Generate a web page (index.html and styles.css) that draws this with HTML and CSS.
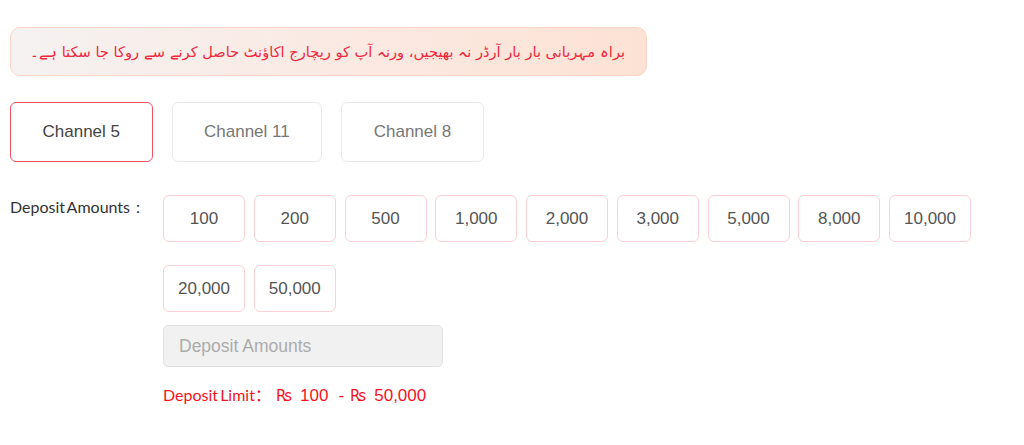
FILE: index.html
```html
<!DOCTYPE html>
<html lang="en">
<head>
<meta charset="utf-8">
<title>Deposit</title>
<link rel="stylesheet" href="styles.css">
</head>
<body>
<div class="page">
  <div class="notice" dir="rtl">براہ مہربانی بار بار آرڈر نہ بھیجیں، ورنہ آپ کو ریچارج اکاؤنٹ حاصل کرنے سے روکا جا سکتا ہے۔</div>

  <div class="channels">
    <div class="channel active">Channel 5</div>
    <div class="channel">Channel 11</div>
    <div class="channel">Channel 8</div>
  </div>

  <div class="deposit">
    <div class="label">Deposit Amounts：</div>
    <div class="body">
      <div class="amounts">
        <div class="amount">100</div>
        <div class="amount">200</div>
        <div class="amount">500</div>
        <div class="amount">1,000</div>
        <div class="amount">2,000</div>
        <div class="amount">3,000</div>
        <div class="amount">5,000</div>
        <div class="amount">8,000</div>
        <div class="amount">10,000</div>
        <div class="amount">20,000</div>
        <div class="amount">50,000</div>
      </div>
      <input class="field" type="text" placeholder="Deposit Amounts">
      <div class="limit"><span class="limit-label">Deposit Limit</span><span class="colon">：</span><span class="rs first">₨</span><span class="num">100</span><span class="dash">-</span><span class="rs">₨</span><span class="num">50,000</span></div>
    </div>
  </div>
</div>
</body>
</html>
```

FILE: styles.css
```css
* { box-sizing: border-box; }
html, body { margin: 0; padding: 0; background: #fff; }
body { font-family: "Liberation Sans", Arial, sans-serif; }

.page { padding: 27px 10px 0 10px; }

.notice {
  width: 637px;
  height: 49px;
  border: 1px solid #fbd6c6;
  border-radius: 10px;
  background: linear-gradient(to right, #f5f2f1 0%, #fbe9e2 55%, #fde2d4 100%);
  color: #f0283c;
  font-family: "DejaVu Sans", sans-serif;
  font-size: 14.6px;
  white-space: nowrap;
  display: flex;
  align-items: center;
  padding: 0 21px 0 10px;
  text-align: right;
}

.channels {
  display: flex;
  gap: 19px;
  margin-top: 26px;
}
.channel {
  height: 60px;
  padding: 0 31.5px;
  border: 1px solid #e9e9e9;
  border-radius: 6px;
  display: flex;
  align-items: center;
  justify-content: center;
  font-size: 17px;
  color: #777;
}
.channel.active {
  border: 1.5px solid #f2505f;
  color: #444;
}

.deposit {
  display: flex;
  margin-top: 33px;
}
.label {
  width: 153px;
  padding-top: 2px;
  font-family: "Lato", sans-serif;
  font-size: 16px;
  color: #333;
  word-spacing: -2px;
}
.body { flex: 1; }

.amounts {
  display: flex;
  flex-wrap: wrap;
  gap: 23px 8.75px;
  width: 820px;
}
.amount {
  width: 82px;
  height: 47px;
  border: 1.5px solid #fcd0d4;
  border-radius: 6px;
  display: flex;
  align-items: center;
  justify-content: center;
  font-size: 17px;
  color: #555;
}

.field {
  display: block;
  margin-top: 13px;
  width: 280px;
  height: 42px;
  border: 1px solid #e2e2e2;
  border-radius: 5px;
  background: #f1f1f1;
  padding: 0 15px;
  font-family: "Liberation Sans", Arial, sans-serif;
  font-size: 17.5px;
  color: #555;
  outline: none;
}
.field::placeholder { color: #acacac; }

.limit {
  margin-top: 15px;
  display: flex;
  align-items: baseline;
  color: #f5141e;
  font-size: 17px;
}
.limit-label {
  font-family: "Lato", sans-serif;
  font-size: 16px;
  word-spacing: -2px;
}
.colon { font-family: "Noto Sans CJK SC", sans-serif; font-size: 16px; }
.rs { font-family: "DejaVu Sans", sans-serif; font-size: 15px; margin-left: 6px; }
.rs.first { margin-left: 5px; }
.num { margin-left: 8px; }
.dash { margin-left: 10px; }
```
